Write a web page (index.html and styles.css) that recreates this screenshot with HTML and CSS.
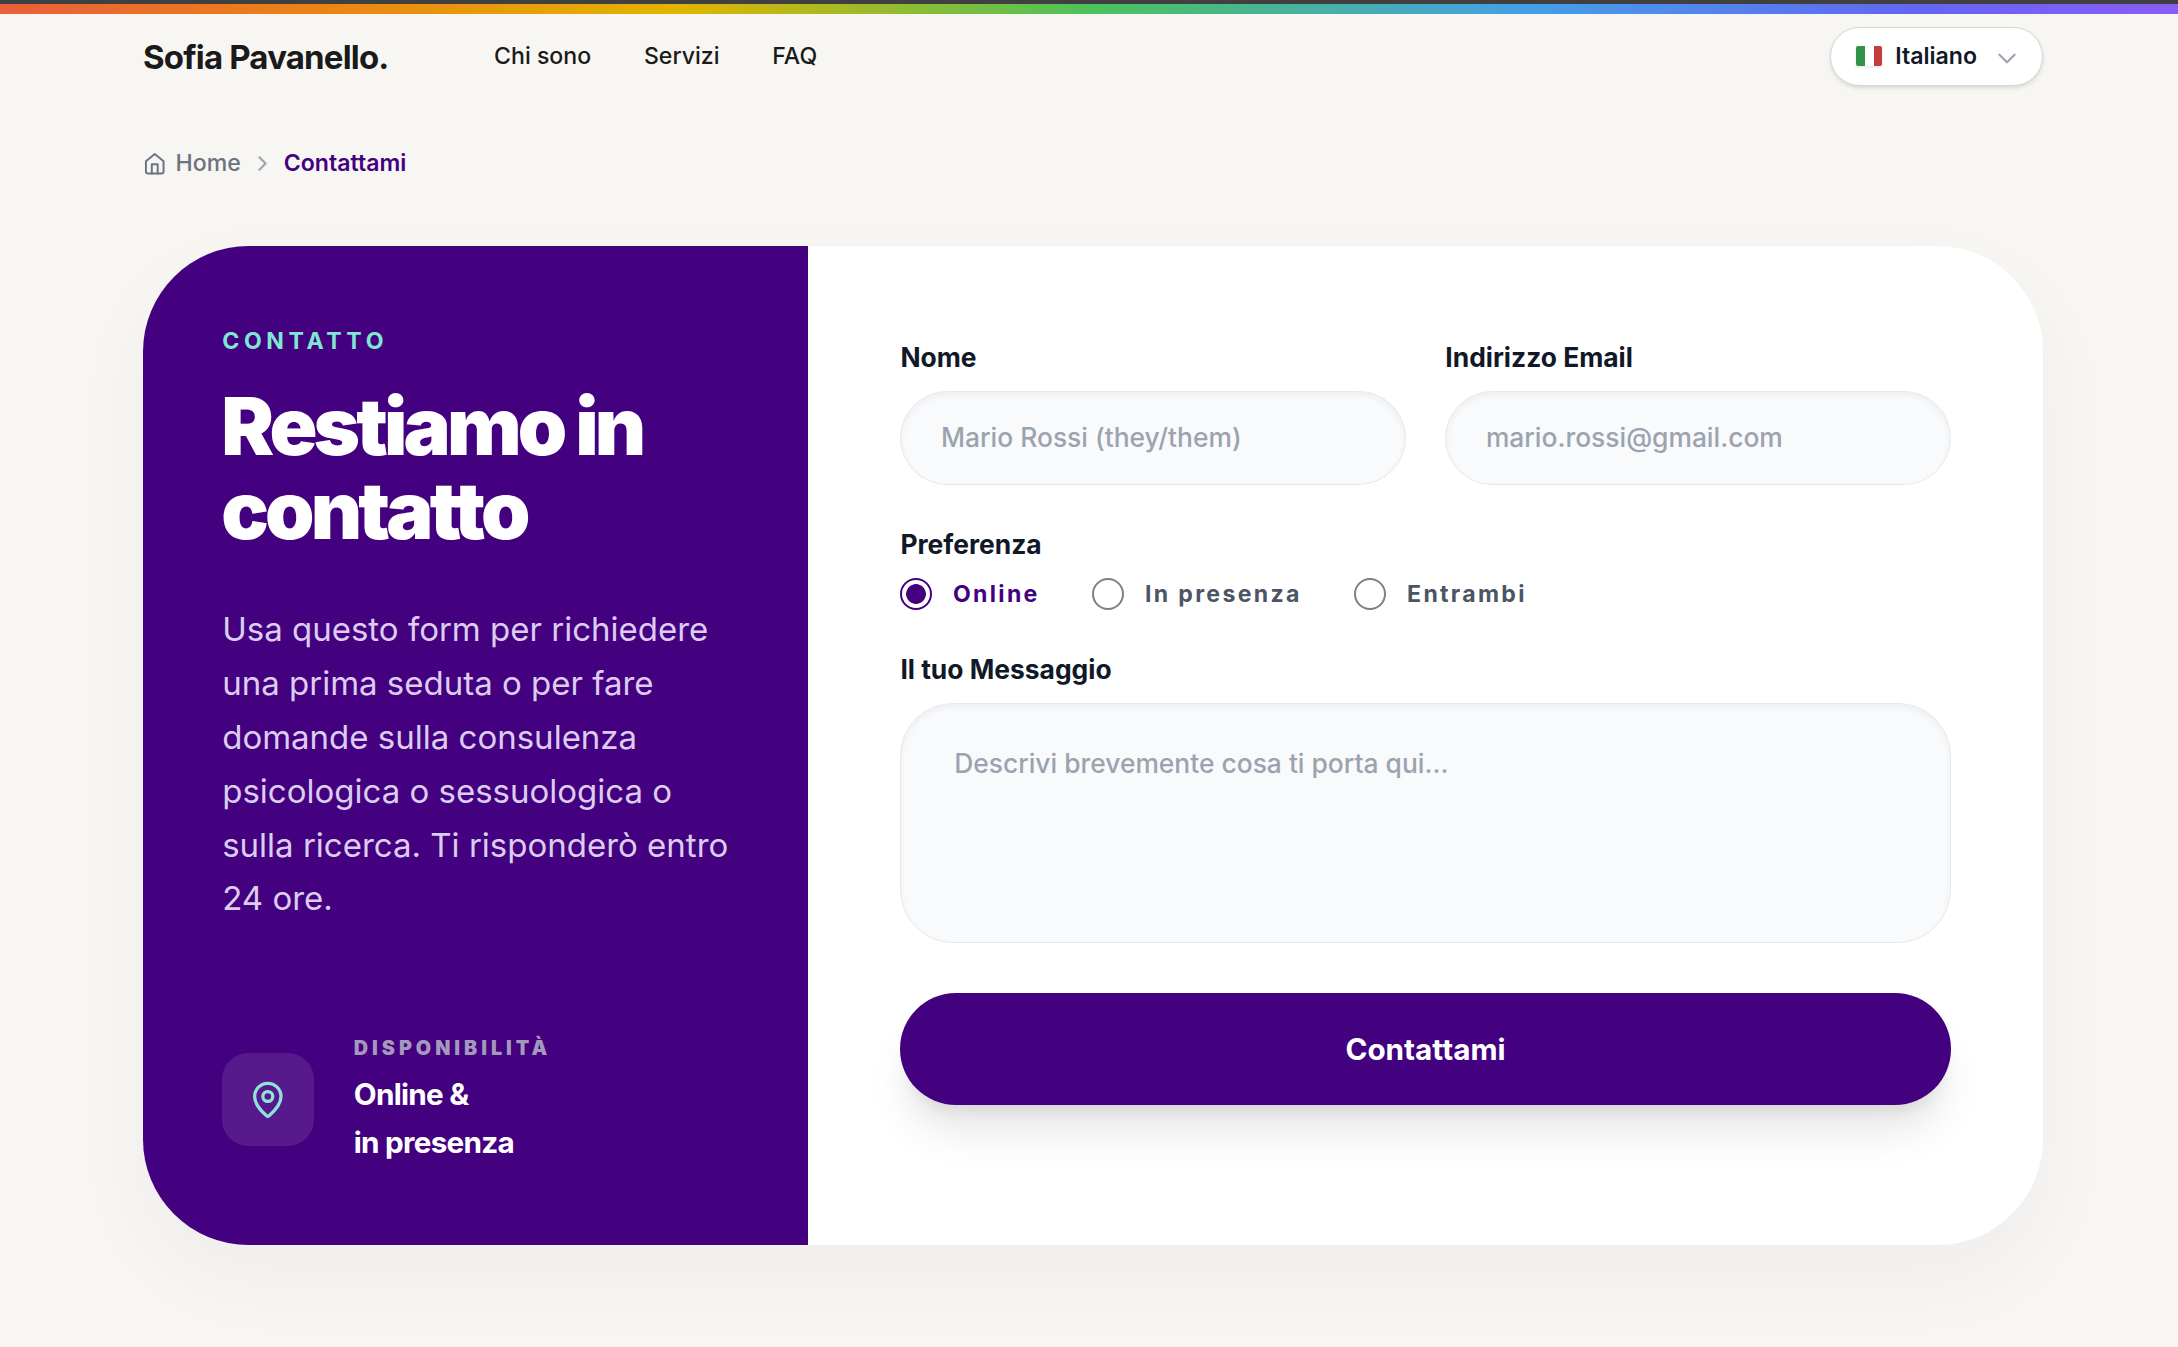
FILE: index.html
```html
<!DOCTYPE html>
<html lang="it">
<head>
    <meta charset="UTF-8">
    <meta name="viewport" content="width=device-width, initial-scale=1.0">
    <title>Contattami - Sofia Pavanello</title>
    <link rel="stylesheet" href="styles.css">
</head>
<body>

    <div class="rainbow-bar"></div>

    <header class="header container">
        <a class="logo" href="#">Sofia Pavanello.</a>
        <nav class="nav">
            <a href="#">Chi sono</a>
            <a href="#">Servizi</a>
            <a href="#">FAQ</a>
        </nav>
        <button class="lang-button" type="button">
            <span class="flag"></span>
            <span>Italiano</span>
            <svg class="lang-chevron" viewBox="0 0 24 24" fill="none" stroke="currentColor" stroke-width="2" stroke-linecap="round" stroke-linejoin="round">
                <path d="M5 9l7 7 7-7"/>
            </svg>
        </button>
    </header>

    <nav class="breadcrumb container">
        <a class="breadcrumb-home" href="#">
            <svg class="home-icon" viewBox="0 0 24 24" fill="none" stroke="currentColor" stroke-width="2" stroke-linecap="round" stroke-linejoin="round">
                <path d="M3 9.5L12 2l9 7.500V20a2 2 0 0 1-2 2H5a2 2 0 0 1-2-2z"/>
                <path d="M9 22V12.500h6V22"/>
            </svg>
            <span>Home</span>
        </a>
        <svg class="sep-icon" viewBox="0 0 24 24" fill="none" stroke="currentColor" stroke-width="2" stroke-linecap="round" stroke-linejoin="round">
            <path d="M9 18l6-6-6-6"/>
        </svg>
        <span class="breadcrumb-current">Contattami</span>
    </nav>

    <main class="container">
        <section class="card">
            <div class="info">
                <p class="eyebrow">CONTATTO</p>
                <h1>Restiamo in contatto</h1>
                <p class="intro">Usa questo form per richiedere una prima seduta o per fare domande sulla consulenza psicologica o sessuologica o sulla ricerca. Ti risponderò entro 24 ore.</p>
                <div class="place">
                    <div class="place-icon">
                        <svg viewBox="0 0 24 24" fill="none" stroke="currentColor" stroke-width="2" stroke-linecap="round" stroke-linejoin="round">
                            <path d="M20 10c0 4.993-5.539 10.193-7.399 11.799a1 1 0 0 1-1.202 0C9.539 20.193 4 14.993 4 10a8 8 0 0 1 16 0"/>
                            <circle cx="12" cy="10" r="3"/>
                        </svg>
                    </div>
                    <div>
                        <p class="place-label">DISPONIBILITÀ</p>
                        <p class="place-text">Online &amp;<br>in presenza</p>
                    </div>
                </div>
            </div>

            <form class="form" onsubmit="return false">
                <div class="row">
                    <div class="field">
                        <label for="nome">Nome</label>
                        <input class="input" type="text" id="nome" placeholder="Mario Rossi (they/them)">
                    </div>
                    <div class="field">
                        <label for="email">Indirizzo Email</label>
                        <input class="input" type="email" id="email" placeholder="mario.rossi@gmail.com">
                    </div>
                </div>

                <div class="field">
                    <span class="label">Preferenza</span>
                    <div class="radios">
                        <label class="radio"><input type="radio" name="preferenza" checked><span>Online</span></label>
                        <label class="radio"><input type="radio" name="preferenza"><span>In presenza</span></label>
                        <label class="radio"><input type="radio" name="preferenza"><span>Entrambi</span></label>
                    </div>
                </div>

                <div class="field">
                    <label for="messaggio">Il tuo Messaggio</label>
                    <textarea class="input textarea" id="messaggio" placeholder="Descrivi brevemente cosa ti porta qui..."></textarea>
                </div>

                <button class="submit" type="submit">Contattami</button>
            </form>
        </section>
    </main>

</body>
</html>
```
FILE: styles.css
```css
* {
    box-sizing: border-box;
    margin: 0;
    padding: 0;
}
html {
    font-size: 26.4px;
}
body {
    min-height: 100vh;
    font-family: Inter, "Liberation Sans", sans-serif;
    background-color: #f7f6f2;
    color: #1a1a1a;
    line-height: 1.5;
}
a {
    color: inherit;
    text-decoration: none;
}
button, input, textarea {
    font-family: inherit;
}
.container {
    width: 1900px;
    margin-left: 143px;
}
.rainbow-bar {
    height: 14px;
    border-top: 4px solid #404040;
    background: linear-gradient(to right, #ea5f3a, #ec8414 15%, #e3b400 31%, #4cc25a 50%, #44a0e8 70%, #6366f1 88%, #8b5cf6);
}

/* header */
.header {
    display: flex;
    align-items: center;
    height: 84px;
}
.logo {
    padding-top: 3px;
    font-size: 1.25rem;
    font-weight: 700;
    letter-spacing: -0.025em;
}
.nav {
    display: flex;
    gap: 2rem;
    margin-left: 4rem;
    font-size: 0.875rem;
    font-weight: 500;
}
.lang-button {
    display: flex;
    align-items: center;
    height: 59px;
    margin-left: auto;
    padding: 0 22px 0 25px;
    border: 1.6px solid #d5d5dc;
    border-radius: 30px;
    background-color: #fff;
    color: #111827;
    font-size: 0.875rem;
    font-weight: 600;
    box-shadow: 0 2px 4px rgba(0, 0, 0, 0.12);
}
.flag {
    width: 26px;
    height: 20px;
    margin-right: 13px;
    border-radius: 2px;
    background: linear-gradient(to right, #2e9248 33.3%, #fff 33.3%, #fff 69%, #c43c3c 69%);
    box-shadow: 0 1px 3px rgba(0, 0, 0, 0.12);
}
.lang-chevron {
    width: 26px;
    height: 26px;
    margin: 3px 0 0 17px;
    color: #9ca3af;
}

/* breadcrumb */
.breadcrumb {
    display: flex;
    align-items: center;
    height: 33px;
    margin-top: 49px;
    font-size: 0.875rem;
    font-weight: 500;
    color: #6b7280;
}
.breadcrumb-home {
    display: flex;
    align-items: center;
}
.home-icon {
    width: 23.5px;
    height: 23.5px;
    margin-right: 9px;
}
.sep-icon {
    width: 25px;
    height: 25px;
    margin: 0 9px;
    color: #9ca3af;
}
.breadcrumb-current {
    font-weight: 600;
    color: #43007f;
}

/* card */
.card {
    display: flex;
    height: 999px;
    margin-top: 66px;
    border-radius: 4rem;
    background-color: #fff;
    overflow: hidden;
    box-shadow: 0 33px 83px rgba(67, 0, 127, 0.04);
}
.info {
    display: flex;
    flex-direction: column;
    width: 35%;
    padding: 3rem 3rem 78px;
    background-color: #43007f;
    color: #fff;
}
.eyebrow {
    font-size: 0.875rem;
    line-height: 1.25rem;
    font-weight: 700;
    letter-spacing: 0.2em;
    color: #7fe7d0;
}
h1 {
    margin: 0.96rem 0 1.91rem -1px;
    font-size: 3rem;
    font-weight: 900;
    line-height: 1.07;
    letter-spacing: -0.049em;
}
.intro {
    font-size: 1.25rem;
    line-height: 1.63;
    color: #dccdf0;
}
.place {
    display: flex;
    align-items: center;
    gap: 1.5rem;
    margin-top: auto;
}
.place-icon {
    display: flex;
    align-items: center;
    justify-content: center;
    width: 92px;
    height: 93px;
    border-radius: 1rem;
    background-color: rgba(255, 255, 255, 0.1);
    color: #8fe3dc;
}
.place-icon svg {
    width: 1.5rem;
    height: 1.5rem;
}
.place-label {
    margin-bottom: 0.27rem;
    font-size: 0.75rem;
    line-height: 1.625;
    font-weight: 900;
    letter-spacing: 0.2em;
    color: #a499bd;
}
.place-text {
    font-size: 1.125rem;
    line-height: 1.61;
    font-weight: 700;
    letter-spacing: -0.025em;
}

/* form */
.form {
    display: flex;
    flex-direction: column;
    gap: 1.5rem;
    flex: 1;
    padding: 3.5rem;
}
.row {
    display: grid;
    grid-template-columns: 1fr 1fr;
    gap: 1.5rem;
}
.field {
    display: flex;
    flex-direction: column;
    gap: 0.5rem;
    font-weight: 700;
    color: #111827;
}
.input {
    width: 100%;
    height: 94px;
    padding: 0 1.5rem 2px;
    border: 1.6px solid #e6e9ec;
    border-radius: 47px;
    background-color: #f8fafc;
    color: #111827;
    font-size: 1rem;
    font-weight: 500;
    box-shadow: inset 0 3px 7px rgba(0, 0, 0, 0.05);
}
.input::placeholder {
    color: #9ca3af;
}
.textarea {
    height: 240px;
    padding: 1.5rem 2rem;
    border-radius: 2rem;
    line-height: 1.5;
    resize: none;
}
.radios {
    display: flex;
    gap: 2rem;
}
.radio {
    display: flex;
    align-items: center;
    gap: 20px;
    font-size: 0.875rem;
    line-height: 1.25rem;
    letter-spacing: 0.1em;
    color: #4b5563;
}
.radio input {
    appearance: none;
    width: 32px;
    height: 32px;
    margin: 0 0.6px 1px 0;
    border: 2px solid #808080;
    border-radius: 50%;
}
.radio input:checked {
    border-color: #43007f;
    background: radial-gradient(circle, #43007f 9.5px, transparent 10.2px);
}
.radio:has(input:checked) {
    color: #43007f;
}
.submit {
    height: 112px;
    margin-top: 10px;
    border: none;
    border-radius: 56px;
    background-color: #43007f;
    color: #fff;
    font-size: 1.125rem;
    font-weight: 700;
    box-shadow: 0 33px 41px -8px rgba(0, 0, 0, 0.1), 0 13px 17px -10px rgba(0, 0, 0, 0.1);
    cursor: pointer;
}
```
